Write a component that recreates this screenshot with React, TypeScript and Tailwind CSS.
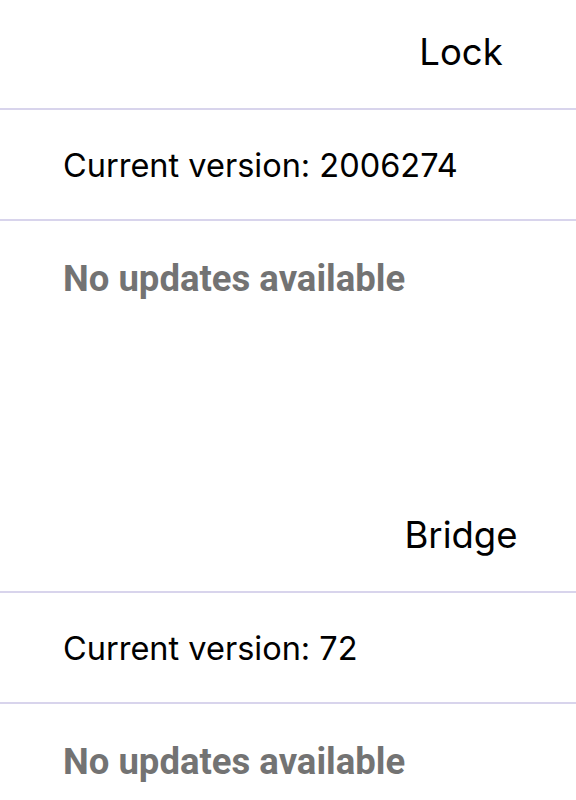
const sections = [
  { name: "Lock", version: "2006274" },
  { name: "Bridge", version: "72" },
]

function Section({ name, version }: { name: string; version: string }) {
  return (
    <section className="h-[483px]">
      <div className="h-[108px] flex justify-end items-center">
        <div className="w-[230px] text-center text-[36.5px] text-black pb-[4px]">{name}</div>
      </div>
      <div className="h-[2px] bg-[#d8d4ec]" />
      <div className="h-[109px] flex items-center px-[63px] pt-[3px] text-[32.5px] text-black">
        Current version: {version}
      </div>
      <div className="h-[2px] bg-[#d8d4ec]" />
      <div
        className="h-[114px] flex items-center px-[63px] pt-[3px] text-[36.5px] font-bold text-[#737373]"
        style={{ fontFamily: "Roboto, sans-serif" }}
      >
        No updates available
      </div>
    </section>
  )
}

export default function App() {
  return (
    <div className="w-[576px] h-[800px] bg-white overflow-hidden" style={{ fontFamily: "Inter, sans-serif" }}>
      {sections.map((s) => (
        <Section key={s.name} name={s.name} version={s.version} />
      ))}
    </div>
  )
}
